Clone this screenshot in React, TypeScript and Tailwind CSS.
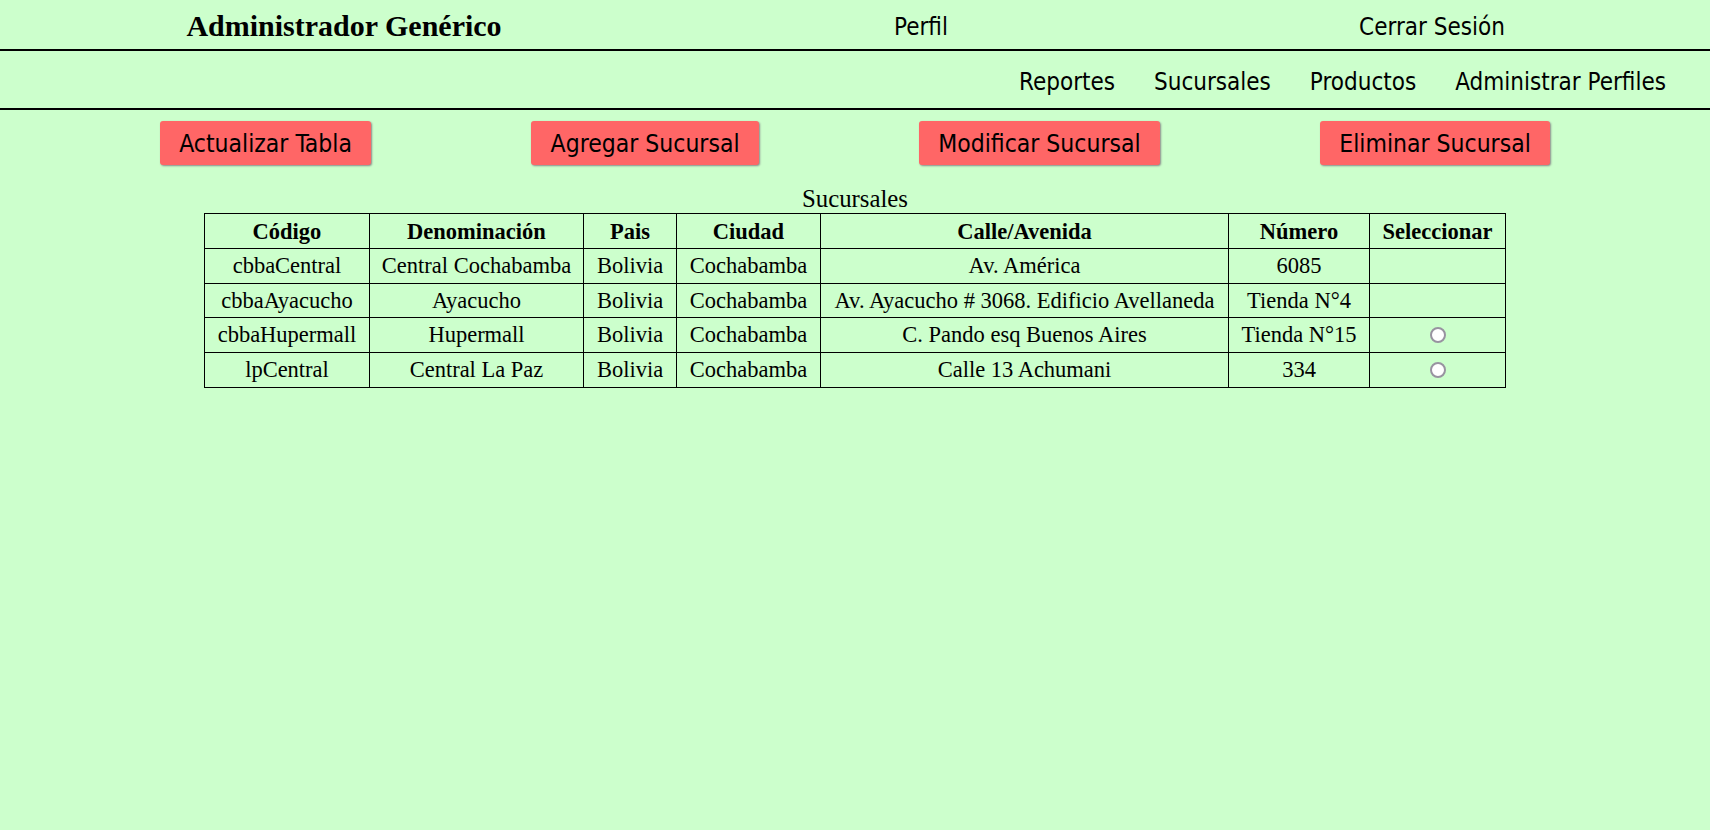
import React from "react";

const sans = "font-['DejaVu_Sans_Condensed','DejaVu_Sans',sans-serif] [font-stretch:condensed]";

const rows = [
  ["cbbaCentral", "Central Cochabamba", "Bolivia", "Cochabamba", "Av. América", "6085", false],
  ["cbbaAyacucho", "Ayacucho", "Bolivia", "Cochabamba", "Av. Ayacucho # 3068. Edificio Avellaneda", "Tienda N°4", false],
  ["cbbaHupermall", "Hupermall", "Bolivia", "Cochabamba", "C. Pando esq Buenos Aires", "Tienda N°15", true],
  ["lpCentral", "Central La Paz", "Bolivia", "Cochabamba", "Calle 13 Achumani", "334", true],
] as const;

const headers = ["Código", "Denominación", "Pais", "Ciudad", "Calle/Avenida", "Número", "Seleccionar"];
const widths = [165, 214, 93, 144, 408, 141, 136];

function Btn({ label }: { label: string }) {
  return (
    <button
      className={`${sans} h-[44px] px-[19.5px] pt-[2px] bg-[#ff6666] text-black text-[24.5px] leading-[28px] rounded-[3px] shadow-[1px_1px_2px_#8a8a8a]`}
    >
      {label}
    </button>
  );
}

export default function App() {
  return (
    <div className="min-h-[830px] w-full bg-[#ccffcc] text-black">
      <div className="flex h-[51px] items-center border-b-[2px] border-black">
        <div className="w-[688px] flex justify-center">
          <span className="font-['Liberation_Serif',serif] font-bold text-[30px] leading-[34px] relative top-[1px]">
            Administrador Genérico
          </span>
        </div>
        <div className={`${sans} w-[466px] flex justify-center text-[24px] relative top-[2px]`}>Perfil</div>
        <div className={`${sans} flex-1 flex justify-center text-[24px] relative top-[2px]`}>Cerrar Sesión</div>
      </div>
      <div
        className={`${sans} flex h-[59px] items-center justify-end gap-[39px] pr-[44px] pt-[4px] border-b-[2px] border-black text-[24px]`}
      >
        <span>Reportes</span>
        <span>Sucursales</span>
        <span>Productos</span>
        <span>Administrar Perfiles</span>
      </div>
      <div className="flex justify-evenly pt-[11px]">
        <Btn label="Actualizar Tabla" />
        <Btn label="Agregar Sucursal" />
        <Btn label="Modificar Sucursal" />
        <Btn label="Eliminar Sucursal" />
      </div>
      <div className="pt-[20px] flex justify-center">
        <table className="font-['Liberation_Serif',serif] text-[22.5px] border-collapse table-fixed w-[1301px]">
          <caption className="text-[24.8px] leading-[28px]">Sucursales</caption>
          <colgroup>
            {widths.map((w, i) => (
              <col key={i} style={{ width: w }} />
            ))}
          </colgroup>
          <thead>
            <tr>
              {headers.map((h) => (
                <th key={h} className="border border-black font-bold h-[35px] leading-[25px] px-1">
                  {h}
                </th>
              ))}
            </tr>
          </thead>
          <tbody>
            {rows.map((r) => (
              <tr key={r[0]}>
                {r.slice(0, 6).map((c, i) => (
                  <td key={i} className="border border-black text-center h-[34.5px] leading-[25px] px-1 whitespace-nowrap">
                    {c as string}
                  </td>
                ))}
                <td className="border border-black text-center h-[34.5px] px-1">
                  {r[6] ? (
                    <span className="inline-block w-[16px] h-[16px] rounded-full border-2 border-[#9893a0] bg-white align-middle relative top-[-2px]" />
                  ) : null}
                </td>
              </tr>
            ))}
          </tbody>
        </table>
      </div>
    </div>
  );
}
